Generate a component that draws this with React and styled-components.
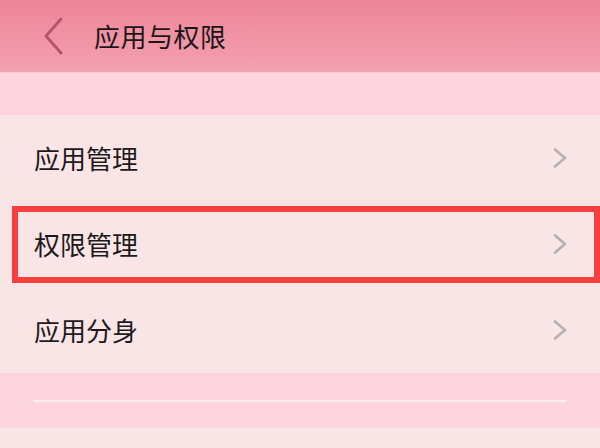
import React from "react"
import styled, { createGlobalStyle } from "styled-components"

const GlobalStyle = createGlobalStyle`
  html, body {
    margin: 0;
    padding: 0;
    background: #f9e5e5;
  }
  body {
    font-family: "Noto Sans CJK SC", "Noto Sans", sans-serif;
    color: #1c1a1b;
  }
`

const items = [
  { label: "应用管理" },
  { label: "权限管理", highlighted: true },
  { label: "应用分身" },
]

const Screen = styled.div`
  width: 600px;
  height: 448px;
  overflow: hidden;
  display: flex;
  flex-direction: column;
  background: #f9e5e5;
`

const Header = styled.header`
  height: 72px;
  flex: none;
  display: flex;
  align-items: center;
  padding-left: 43px;
  gap: 29px;
  background: linear-gradient(180deg, #ee859a 0%, #f3a0b0 100%);
  border-bottom: 1px solid #fbc9d3;
`

const BackButton = styled.button`
  width: 22px;
  height: 38px;
  padding: 0;
  border: none;
  background: none;
  display: flex;
  align-items: center;
  justify-content: center;
`

const Title = styled.h1`
  margin: 0;
  font-size: 26px;
  font-weight: 400;
  line-height: 1;
  color: #1b1617;
  letter-spacing: 0.5px;
`

const Band = styled.div`
  height: ${(p) => p.$height}px;
  flex: none;
  background: #fdd5de;
  display: flex;
  align-items: center;
  padding: 0 33px;
`

const Line = styled.div`
  flex: 1;
  height: 2px;
  background: #fbeef0;
`

const List = styled.ul`
  list-style: none;
  margin: 0;
  padding: 0;
  flex: none;
`

const Row = styled.li`
  position: relative;
  height: 86px;
  display: flex;
  align-items: center;
  justify-content: space-between;
  padding: 0 33px 0 34px;
`

const Label = styled.span`
  font-size: 26px;
  line-height: 1;
  color: #1c1a1b;
`

const Highlight = styled.div`
  position: absolute;
  left: 12px;
  right: 0;
  top: 5px;
  bottom: 4px;
  border: 6px solid #f6403f;
  pointer-events: none;
`

const Back = () => (
  <svg width="22" height="38" viewBox="0 0 22 38">
    <polyline
      points="18,2 3,19 18,36"
      fill="none"
      stroke="#b4526f"
      strokeWidth="2.8"
      strokeLinecap="round"
      strokeLinejoin="round"
    />
  </svg>
)

const Chevron = () => (
  <svg width="14" height="20" viewBox="0 0 14 20">
    <polyline
      points="2,1.5 12,10 2,18.5"
      fill="none"
      stroke="#b6b0b1"
      strokeWidth="2.6"
      strokeLinecap="round"
      strokeLinejoin="round"
    />
  </svg>
)

export default function App() {
  return (
    <>
      <GlobalStyle />
      <Screen>
        <Header>
          <BackButton aria-label="返回">
            <Back />
          </BackButton>
          <Title>应用与权限</Title>
        </Header>
        <Band $height={42} />
        <List>
          {items.map((item) => (
            <Row key={item.label}>
              <Label>{item.label}</Label>
              <Chevron />
              {item.highlighted && <Highlight />}
            </Row>
          ))}
        </List>
        <Band $height={55}>
          <Line />
        </Band>
      </Screen>
    </>
  )
}
